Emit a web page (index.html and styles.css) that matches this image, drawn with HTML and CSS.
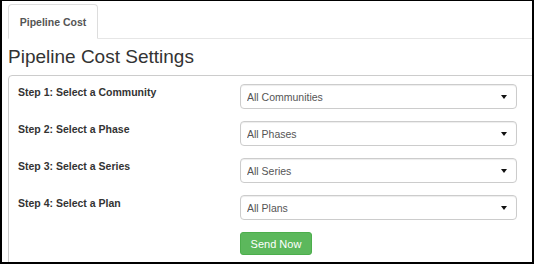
FILE: index.html
```html
<!DOCTYPE html>
<html lang="en">
<head>
    <meta charset="UTF-8">
    <meta name="viewport" content="width=device-width, initial-scale=1.0">
    <title>Pipeline Cost</title>
    <link rel="stylesheet" href="styles.css">
</head>
<body>
    <div class="frame">
        <ul class="tabs">
            <li class="tab active">Pipeline Cost</li>
        </ul>

        <h1>Pipeline Cost Settings</h1>

        <div class="panel">
            <form class="settings-form">
                <label class="step-label" for="community">Step 1: Select a Community</label>
                <div class="select-wrap">
                    <select id="community" class="form-select">
                        <option>All Communities</option>
                    </select>
                    <svg class="caret" width="6" height="4" viewBox="0 0 6 4"><path d="M0 0H6L3 4Z"/></svg>
                </div>

                <label class="step-label" for="phase">Step 2: Select a Phase</label>
                <div class="select-wrap">
                    <select id="phase" class="form-select">
                        <option>All Phases</option>
                    </select>
                    <svg class="caret" width="6" height="4" viewBox="0 0 6 4"><path d="M0 0H6L3 4Z"/></svg>
                </div>

                <label class="step-label" for="series">Step 3: Select a Series</label>
                <div class="select-wrap">
                    <select id="series" class="form-select">
                        <option>All Series</option>
                    </select>
                    <svg class="caret" width="6" height="4" viewBox="0 0 6 4"><path d="M0 0H6L3 4Z"/></svg>
                </div>

                <label class="step-label" for="plan">Step 4: Select a Plan</label>
                <div class="select-wrap">
                    <select id="plan" class="form-select">
                        <option>All Plans</option>
                    </select>
                    <svg class="caret" width="6" height="4" viewBox="0 0 6 4"><path d="M0 0H6L3 4Z"/></svg>
                </div>

                <div class="actions">
                    <button type="button" class="btn-send">Send Now</button>
                </div>
            </form>
        </div>
    </div>
</body>
</html>
```

FILE: styles.css
```css
* {
    box-sizing: border-box;
}

body {
    margin: 0;
    font-family: 'Liberation Sans', Arial, sans-serif;
    color: #333;
    background-color: #fff;
}

.frame {
    width: 534px;
    height: 264px;
    border-style: solid;
    border-color: #000;
    border-width: 1px 2px 2px 2px;
    padding: 3px 0 0 6px;
    overflow: hidden;
}

.tabs {
    list-style: none;
    margin: 0;
    padding: 0;
    display: flex;
    border-bottom: 1px solid #e6e6e6;
}

.tab {
    width: 90px;
    height: 35px;
    margin-bottom: -1px;
    border: 1px solid #ddd;
    border-bottom-color: transparent;
    border-radius: 4px 4px 0 0;
    background-color: #fff;
    color: #555;
    font-size: 10.5px;
    font-weight: bold;
    display: flex;
    align-items: center;
    justify-content: center;
}

h1 {
    margin: 7px 0 8px;
    font-size: 19px;
    font-weight: normal;
    line-height: 21px;
    color: #333;
}

.panel {
    margin-right: -20px;
    height: 220px;
    border: 1px solid #ccc;
    border-radius: 4px;
    padding: 8px 0 0 9px;
}

.settings-form {
    display: grid;
    grid-template-columns: 222px 277px;
    row-gap: 12px;
}

.step-label {
    font-size: 10.5px;
    font-weight: bold;
    line-height: 15px;
    padding-top: 1px;
    color: #333;
}

.select-wrap {
    position: relative;
}

.form-select {
    appearance: none;
    -webkit-appearance: none;
    display: block;
    width: 100%;
    height: 25px;
    margin: 0;
    padding: 0 6px;
    border: 1px solid #ccc;
    border-radius: 4px;
    background-color: #fff;
    box-shadow: inset 0 1px 1px rgba(0, 0, 0, 0.075);
    font-family: 'Liberation Sans', Arial, sans-serif;
    font-size: 10.5px;
    color: #555;
}

.caret {
    position: absolute;
    right: 10px;
    top: 11px;
    fill: #111;
}

.actions {
    grid-column: 2;
}

.btn-send {
    width: 72px;
    height: 23px;
    padding: 0;
    border: 1px solid #4cae4c;
    border-radius: 3px;
    background-color: #5cb85c;
    color: #fff;
    font-family: 'Liberation Sans', Arial, sans-serif;
    font-size: 11px;
}
```
